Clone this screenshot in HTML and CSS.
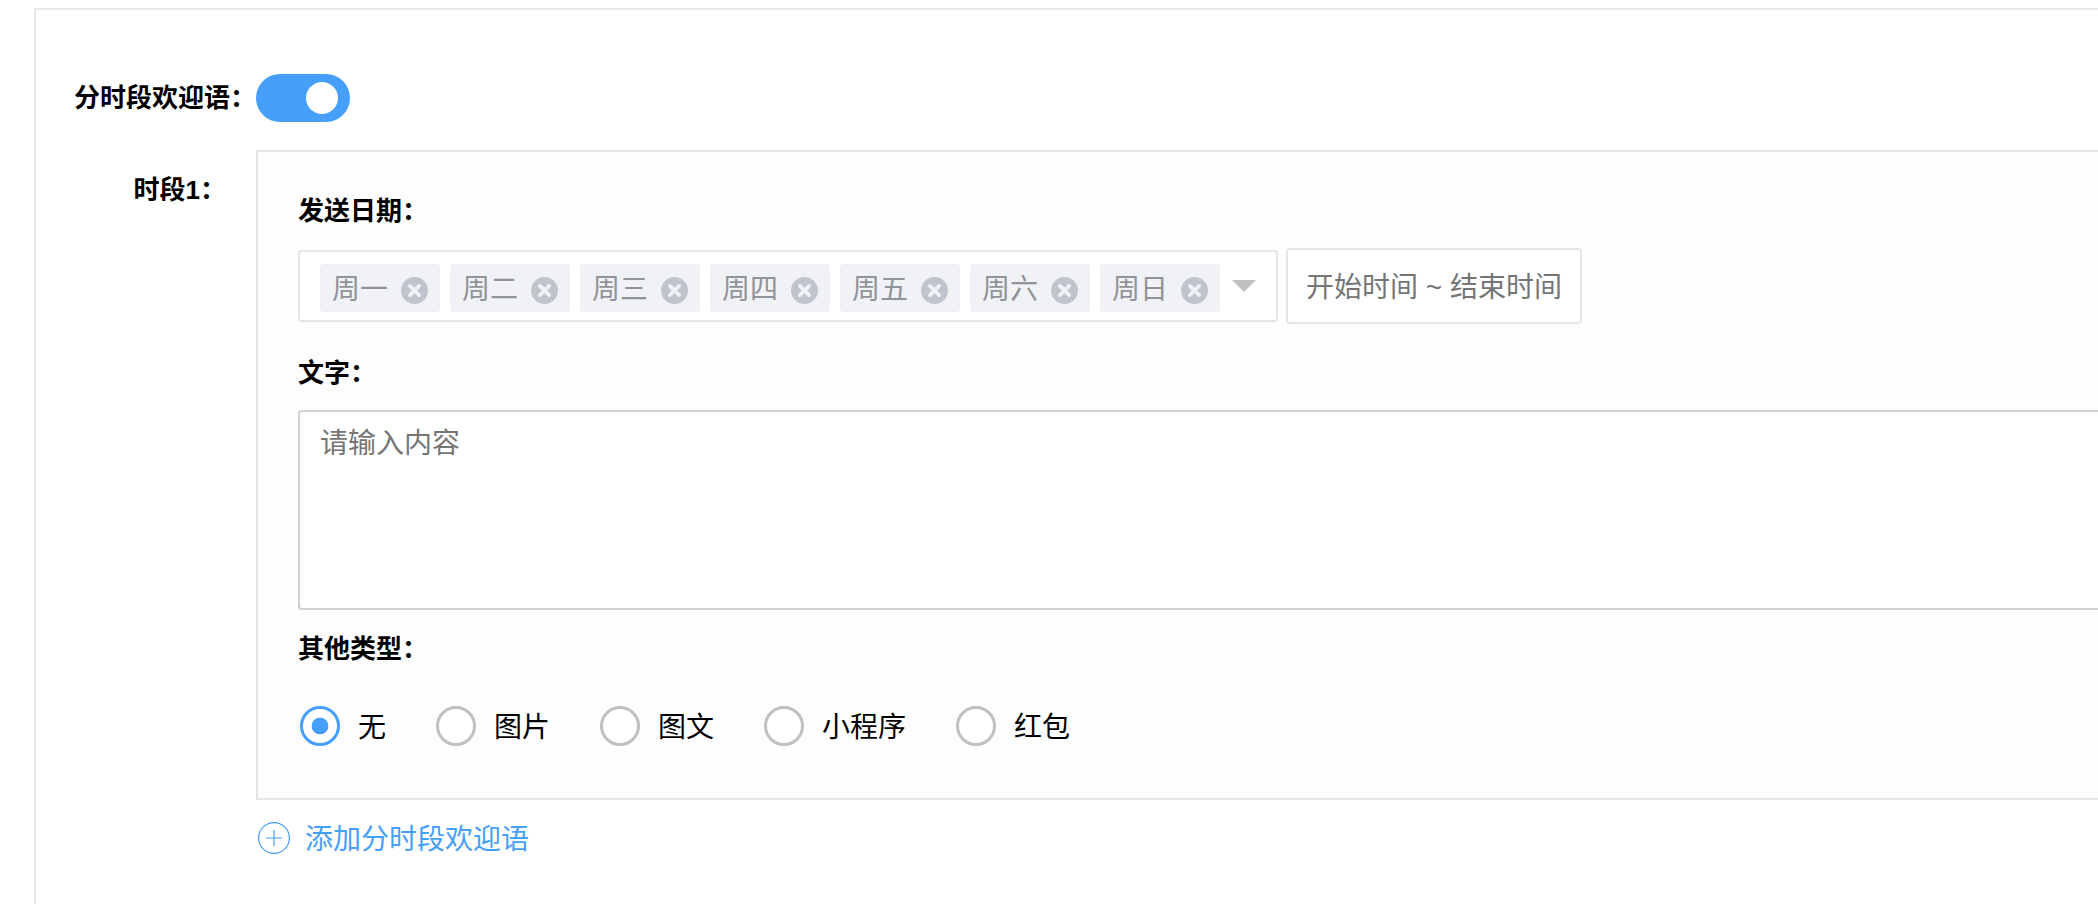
FILE: index.html
```
<!DOCTYPE html>
<html lang="zh-CN">
<head>
  <meta charset="UTF-8">
  <meta name="viewport" content="width=device-width, initial-scale=1.0">
  <title>分时段欢迎语</title>
  <link rel="stylesheet" href="styles.css">
</head>
<body>
<svg width="0" height="0" class="svg-defs">
  <symbol id="icon-close" viewBox="0 0 27 27">
    <circle cx="13.5" cy="13.5" r="13.5" fill="#c0c4cc"/>
    <path d="M8.9 8.9l9.2 9.2M18.1 8.9l-9.2 9.2" stroke="#f0f2f5" stroke-width="3.8" stroke-linecap="round"/>
  </symbol>
</svg>

<div class="form-card">
  <div class="form-row switch-row">
    <div class="row-label">分时段欢迎语：</div>
    <input type="checkbox" class="switch" checked>
  </div>

  <div class="form-row">
    <div class="row-label period-label">时段1：</div>

    <div class="period-panel">
      <div class="field-title">发送日期：</div>
      <div class="date-line">
        <div class="week-select">
          <div class="tag"><span>周一</span><svg class="tag-close"><use href="#icon-close"/></svg></div>
          <div class="tag"><span>周二</span><svg class="tag-close"><use href="#icon-close"/></svg></div>
          <div class="tag"><span>周三</span><svg class="tag-close"><use href="#icon-close"/></svg></div>
          <div class="tag"><span>周四</span><svg class="tag-close"><use href="#icon-close"/></svg></div>
          <div class="tag"><span>周五</span><svg class="tag-close"><use href="#icon-close"/></svg></div>
          <div class="tag"><span>周六</span><svg class="tag-close"><use href="#icon-close"/></svg></div>
          <div class="tag"><span>周日</span><svg class="tag-close"><use href="#icon-close"/></svg></div>
          <i class="caret"></i>
        </div>
        <div class="time-range">开始时间 ~ 结束时间</div>
      </div>

      <div class="field-title text-title">文字：</div>
      <textarea class="content-input" placeholder="请输入内容"></textarea>

      <div class="field-title type-title">其他类型：</div>
      <div class="radio-group">
        <label class="radio"><input type="radio" name="type" checked><span>无</span></label>
        <label class="radio"><input type="radio" name="type"><span>图片</span></label>
        <label class="radio"><input type="radio" name="type"><span>图文</span></label>
        <label class="radio"><input type="radio" name="type"><span>小程序</span></label>
        <label class="radio"><input type="radio" name="type"><span>红包</span></label>
      </div>
    </div>
  </div>

  <div class="add-period">
    <svg class="add-icon" viewBox="0 0 32 32">
      <circle cx="16" cy="16" r="15.4"/>
      <path d="M8 16h16M16 8v16"/>
    </svg>
    <span>添加分时段欢迎语</span>
  </div>
</div>
</body>
</html>
```
FILE: styles.css
```
* {
  box-sizing: border-box;
  margin: 0;
  padding: 0;
}

:root {
  --primary-color: #469ffb;
  --border-color: #e5e5e5;
  --placeholder: #757575;
}

body {
  height: 904px;
  padding: 8px 0 0 34px;
  overflow: hidden;
  background-color: #fff;
  color: #000;
  font-family: "Liberation Sans", "Noto Sans CJK SC", sans-serif;
  font-size: 28px;
  line-height: 40px;
}

.svg-defs {
  position: absolute;
}

.form-card {
  height: 896px;
  padding-top: 64px;
  border-top: 2px solid #e8e8e8;
  border-left: 2px solid #e8e8e8;
}

.form-row {
  display: flex;
  align-items: flex-start;
}

.switch-row {
  align-items: center;
  margin-bottom: 28px;
}

.row-label {
  flex: none;
  width: 220px;
  font-size: 26px;
  font-weight: bold;
  text-align: right;
  white-space: nowrap;
}

.period-label {
  padding: 20px 30px 0 0;
}

/* Switch */
.switch {
  display: flex;
  align-items: center;
  justify-content: flex-end;
  width: 94px;
  height: 48px;
  padding: 0 12px;
  border-radius: 24px;
  background-color: var(--primary-color);
  appearance: none;
}

.switch::before {
  content: "";
  width: 32px;
  height: 32px;
  border-radius: 50%;
  background-color: #fff;
}

/* Period panel */
.period-panel {
  flex: 1;
  height: 650px;
  padding: 39px 0 0 40px;
  border: 2px solid var(--border-color);
  border-right: none;
  background-color: #fdfdfd;
}

.field-title {
  font-size: 26px;
  font-weight: bold;
}

.date-line {
  display: flex;
  align-items: center;
  gap: 8px;
  margin-top: 17px;
}

.week-select {
  display: flex;
  align-items: center;
  gap: 10px;
  width: 980px;
  height: 72px;
  padding: 0 20px;
  border: 2px solid var(--border-color);
  border-radius: 4px;
  background-color: #fff;
}

.tag {
  display: flex;
  align-items: center;
  justify-content: space-between;
  width: 120px;
  height: 48px;
  margin-top: 4px;
  padding: 4px 12px 0;
  border-radius: 4px;
  background-color: #f0f2f5;
  color: #909399;
}

.tag-close {
  width: 27px;
  height: 27px;
}

.caret {
  margin-left: 2px;
  border: 12px solid transparent;
  border-top-color: #c0c0c0;
  border-bottom: none;
}

.time-range {
  width: 296px;
  height: 76px;
  padding: 2px 18px 0;
  border: 2px solid var(--border-color);
  border-radius: 4px;
  background-color: #fff;
  color: var(--placeholder);
  line-height: 72px;
  white-space: nowrap;
}

.text-title {
  margin-top: 29px;
}

.content-input {
  display: block;
  width: 100%;
  height: 200px;
  margin-top: 17px;
  padding: 12px 20px;
  border: 2px solid #d0d0d0;
  border-right: none;
  border-radius: 4px 0 0 4px;
  outline: none;
  resize: none;
  background-color: #fff;
  font: inherit;
}

.content-input::placeholder {
  color: var(--placeholder);
}

.type-title {
  margin-top: 19px;
}

/* Radios */
.radio-group {
  display: flex;
  gap: 50px;
  margin: 37px 0 0 2px;
}

.radio {
  display: flex;
  gap: 18px;
}

.radio span,
.add-period span {
  position: relative;
  top: 2px;
}

.radio input {
  width: 40px;
  height: 40px;
  border: 3px solid #c0c0c0;
  border-radius: 50%;
  background-color: #fff;
  appearance: none;
}

.radio input:checked {
  border-color: var(--primary-color);
  background: radial-gradient(circle, var(--primary-color) 8px, #fff 8.7px);
}

.add-period {
  display: flex;
  align-items: center;
  gap: 15px;
  margin: 18px 0 0 222px;
  color: var(--primary-color);
}

.add-icon {
  width: 32px;
  height: 32px;
  fill: none;
  stroke: var(--primary-color);
  stroke-width: 1.2;
}
```
